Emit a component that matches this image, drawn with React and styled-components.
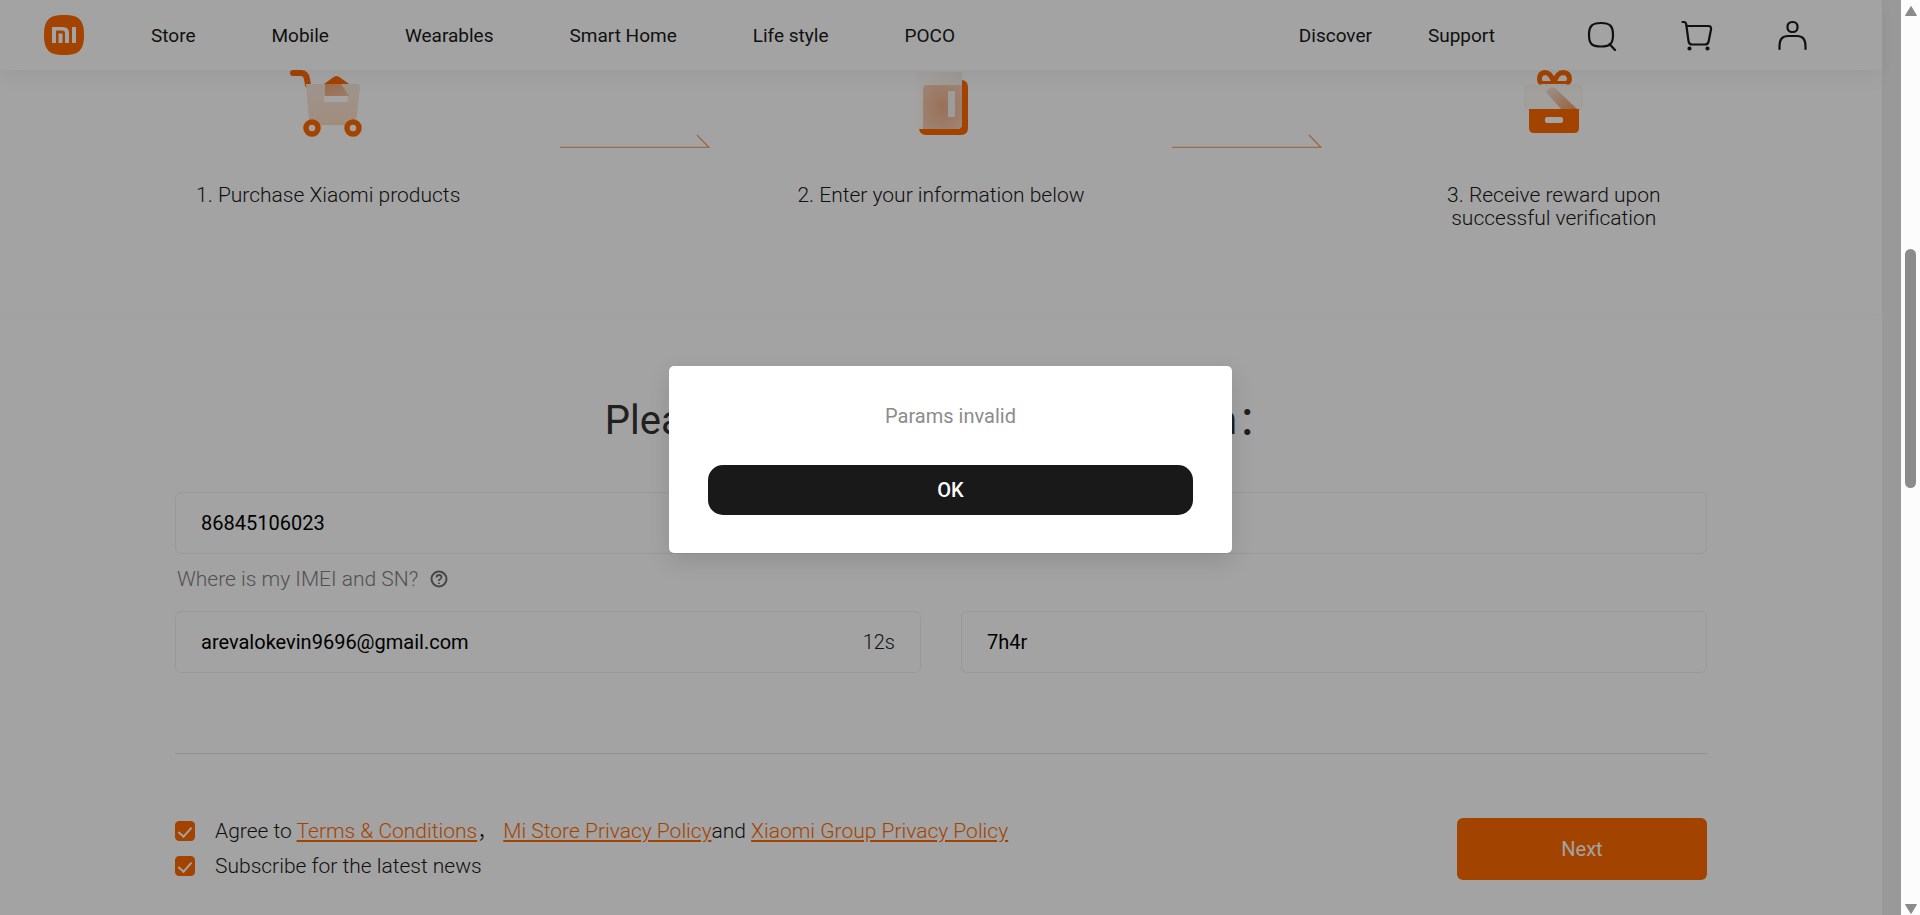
import { useState } from "react";
import styled, { createGlobalStyle } from "styled-components";

const GlobalStyle = createGlobalStyle`
  * {
    box-sizing: border-box;
  }
  body {
    margin: 0;
    font-family: Roboto, "Noto Sans CJK SC", sans-serif;
    font-size: 20px;
    color: #191919;
  }
  button, input {
    font-family: inherit;
    font-size: inherit;
  }
`

const Shell = styled.div`
  display: flex;
  height: 100vh;
  overflow: hidden;
`

const Screen = styled.div`
  position: relative;
  flex: 1;
  min-width: 0;
  overflow: hidden;
  background: #f0f0f0;
  padding-right: 19px;
`

const Page = styled.div`
  position: relative;
  min-height: 100%;
  background: white;
`

const Header = styled.header`
  position: absolute;
  top: 0;
  left: 0;
  right: 0;
  z-index: 1;
  height: 70px;
  padding: 0 74px 0 44px;
  display: flex;
  align-items: center;
  background: white;
  box-shadow: 0 6px 20px rgba(0, 0, 0, 0.06);
`

const Logo = styled.a`
  display: flex;
  margin-right: 67px;
`

const Nav = styled.nav`
  display: flex;
  gap: ${({ $gap }) => $gap};
`

const NavLink = styled.a`
  font-size: 19px;
  color: #191919;
  text-decoration: none;
  white-space: nowrap;
`

const Spacer = styled.div`
  flex: 1;
`

const Tools = styled.div`
  display: flex;
  gap: 63px;
  margin-left: 91px;
`

const ToolButton = styled.button`
  display: flex;
  padding: 0;
  border: none;
  background: transparent;
  cursor: pointer;
`

const Steps = styled.section`
  display: grid;
  grid-template-columns: repeat(5, 1fr);
  justify-items: center;
  align-items: start;
  height: 313px;
  padding: 50px 175px 0;
  box-shadow: 0 4px 10px rgba(0, 0, 0, 0.02);
`

const Step = styled.div`
  display: flex;
  flex-direction: column;
  align-items: center;
  gap: 34px;
  font-size: 21px;
  font-weight: 300;
  line-height: 23px;
  text-align: center;
`

const Arrow = styled.svg`
  margin-top: 84px;
`

const Form = styled.form`
  padding: 0 175px;
`

const Title = styled.h2`
  margin: 0;
  padding: 81px 0 44px;
  font-size: 40px;
  font-weight: 400;
  line-height: 54px;
  text-align: center;
  white-space: nowrap;
  color: #333;
`

const Field = styled.div`
  flex: 1;
  display: flex;
  align-items: center;
  height: 62px;
  padding: 0 25px;
  border: 1px solid #f0f0f0;
  border-radius: 6px;
  background: white;
`

const StyledInput = styled.input`
  flex: 1;
  min-width: 0;
  padding: 0;
  border: none;
  background: transparent;
  color: black;
  &:focus {
    outline: none;
  }
`

const Countdown = styled.span`
  font-weight: 300;
`

const Hint = styled.div`
  display: flex;
  align-items: center;
  gap: 12px;
  height: 50px;
  margin-bottom: 7px;
  padding-left: 2px;
  font-size: 21px;
  font-weight: 300;
  color: #808080;
`

const FieldRow = styled.div`
  display: flex;
  gap: 40px;
`

const Bottom = styled.div`
  display: flex;
  justify-content: space-between;
  align-items: flex-start;
  margin-top: 80px;
  padding-top: 64px;
  border-top: 1px solid #e4e4e4;
`

const Agreements = styled.div`
  display: flex;
  flex-direction: column;
  gap: 11px;
  padding-top: 1px;
  font-size: 21px;
  font-weight: 300;
  line-height: 24px;
`

const CheckRow = styled.div`
  display: flex;
  align-items: center;
  gap: 20px;
`

const StyledCheckbox = styled.input.attrs({ type: "checkbox" })`
  appearance: none;
  display: flex;
  justify-content: center;
  width: 20px;
  height: 20px;
  margin: 0;
  border: 1px solid #ff6900;
  border-radius: 4px;
  background: white;
  &:checked {
    background: #ff6900;
  }
  &:checked::before {
    content: "";
    width: 6px;
    height: 11px;
    margin-top: 2px;
    border: solid white;
    border-width: 0 2px 2px 0;
    transform: rotate(42deg);
  }
`

const PolicyLink = styled.a`
  color: #ff6900;
  text-decoration: underline;
  text-decoration-thickness: 2px;
  text-underline-offset: 2px;
`

const NextButton = styled.button`
  width: 250px;
  height: 62px;
  border: none;
  border-radius: 6px;
  background: #ff6900;
  color: white;
  cursor: pointer;
`

const Overlay = styled.div`
  position: absolute;
  inset: 0;
  z-index: 2;
  display: flex;
  align-items: center;
  justify-content: center;
  padding-top: 4px;
  background: rgba(0, 0, 0, 0.36);
`

const Dialog = styled.div`
  display: flex;
  flex-direction: column;
  gap: 35px;
  width: 563px;
  padding: 36px 39px 38px;
  border-radius: 5px;
  background: white;
  box-shadow: 0 8px 24px rgba(0, 0, 0, 0.12);
  text-align: center;
`

const Message = styled.p`
  margin: 0;
  line-height: 28px;
  color: #8c8c8c;
`

const OkButton = styled.button`
  height: 50px;
  border: none;
  border-radius: 15px;
  background: #191919;
  color: white;
  font-weight: 500;
  cursor: pointer;
`

const Scrollbar = styled.div`
  display: flex;
  flex-direction: column;
  align-items: center;
  width: 19px;
  padding: 6px 0 1px;
  background: #fcfcfc;
`

const Thumb = styled.div`
  width: 11px;
  height: 239px;
  margin-top: 233px;
  margin-bottom: auto;
  border-radius: 6px;
  background: #8b8b8b;
`

const leftLinks = ["Store", "Mobile", "Wearables", "Smart Home", "Life style", "POCO"];
const rightLinks = ["Discover", "Support"];

function MiLogo() {
  return (
    <svg width="40" height="40" viewBox="0 0 40 40">
      <path d="M20 0C35 0 40 5 40 20S35 40 20 40 0 35 0 20 5 0 20 0Z" fill="#ff6900" />
      <path d="M8 12H19Q25 12 25 18V28H21V18Q21 15.500 18 15.500H12V28H8Z" fill="white" />
      <path d="M14.500 18.500H18.500V28H14.500ZM28 12H32V28H28Z" fill="white" />
    </svg>
  );
}

function ToolIcon({ children }) {
  return (
    <svg width="32" height="32" viewBox="0 0 32 32" fill="none" stroke="#191919" strokeWidth="2.2" strokeLinecap="round">
      {children}
    </svg>
  );
}

function CartPicture() {
  return (
    <svg width="100" height="100" viewBox="0 0 100 100">
      <defs>
        <linearGradient id="basket" x1="0" y1="0" x2="0" y2="1">
          <stop offset="0" stopColor="#f7e9de" />
          <stop offset="1" stopColor="#fbdcc4" />
        </linearGradient>
        <linearGradient id="goods" x1="0" y1="0" x2="1" y2="1">
          <stop offset="0" stopColor="#f5a777" />
          <stop offset="1" stopColor="#f0c4a6" />
        </linearGradient>
      </defs>
      <path d="M15 23H23Q28 23 29 29L30 35" fill="none" stroke="#ff6900" strokeWidth="6" strokeLinecap="round" />
      <path d="M46 34L55 27.500Q58.500 24.500 62 27.500L71 34Z" fill="#ff6900" />
      <path d="M28 34H79Q82 34 82 38L78 72Q77 75 74 75H34Q31 75 31 72Z" fill="url(#basket)" />
      <path d="M47 34H63L71 46H47Z" fill="url(#goods)" />
      <path d="M46 46H70V50Q70 52 68 52H46Z" fill="white" />
      <circle cx="34" cy="78" r="6" fill="white" stroke="#ff6900" strokeWidth="5.500" />
      <circle cx="75" cy="78" r="6" fill="white" stroke="#ff6900" strokeWidth="5.500" />
    </svg>
  );
}

function BookPicture() {
  return (
    <svg width="100" height="100" viewBox="0 0 100 100">
      <defs>
        <radialGradient id="cover" cx="0.5" cy="0.5" r="0.75">
          <stop offset="0" stopColor="#f0b088" />
          <stop offset="1" stopColor="#f7d3bb" />
        </radialGradient>
        <linearGradient id="glass" x1="0" y1="0" x2="1" y2="0">
          <stop offset="0" stopColor="#fffdfa" />
          <stop offset="1" stopColor="#f6efe7" />
        </linearGradient>
      </defs>
      <path d="M28 79H66Q71 79 71 74V30Q77 31 77 37V78Q77 85 70 85H36Q29 85 28 79Z" fill="#ff6900" />
      <path d="M24 27Q24 22 29 22H71V74Q71 79 66 79H28Q24 79 24 75Z" fill="url(#glass)" />
      <path d="M32 39Q32 35 36 35H71V74Q71 79 66 79H32Z" fill="url(#cover)" />
      <rect x="57" y="41" width="7" height="26" fill="#f5f5f5" />
    </svg>
  );
}

function GiftPicture() {
  return (
    <svg width="100" height="100" viewBox="0 0 100 100">
      <defs>
        <linearGradient id="ribbon" x1="0" y1="0" x2="1" y2="1">
          <stop offset="0" stopColor="#f0e4db" />
          <stop offset="1" stopColor="#f49a62" />
        </linearGradient>
      </defs>
      <g fill="none" stroke="#ff6900" strokeWidth="5">
        <path d="M50 34V33Q47 22.500 41 22.500Q35.500 23 35.500 29Q35.500 32 38 34" />
        <path d="M50 34V33Q53 22.500 59 22.500Q65.500 23 65.500 29Q65.500 32 62 34" />
        <path d="M38 32.500H62" strokeWidth="3" />
      </g>
      <rect x="21" y="35" width="57" height="25" rx="4" fill="#fcfaf5" stroke="#faf2e4" />
      <path d="M42 42Q45 36 51 38L73 59H57Z" fill="url(#ribbon)" />
      <path d="M25 59H75V78Q75 83 70 83H30Q25 83 25 78Z" fill="#ff6900" />
      <rect x="41" y="67" width="18" height="6" rx="2" fill="white" />
    </svg>
  );
}

function StepArrow() {
  return (
    <Arrow width="150" height="14" viewBox="0 0 150 14" fill="none" stroke="#f8a872">
      <path d="M0 13.500H149L137 1" strokeWidth="1.500" />
    </Arrow>
  );
}

function CheckItem({ id, children }) {
  const [checked, setChecked] = useState(true);

  return (
    <CheckRow>
      <StyledCheckbox id={id} checked={checked} onChange={() => setChecked(!checked)} />
      <label htmlFor={id}>{children}</label>
    </CheckRow>
  );
}

export default function App() {
  const [imei, setImei] = useState("86845106023");
  const [email, setEmail] = useState("arevalokevin9696@gmail.com");
  const [code, setCode] = useState("7h4r");
  const [showDialog, setShowDialog] = useState(true);

  return (
    <>
      <GlobalStyle />
      <Shell>
        <Screen>
          <Page>
            <Header>
              <Logo href="#" aria-label="Mi"><MiLogo /></Logo>
              <Nav $gap="76px">
                {leftLinks.map((txt) => <NavLink href="#" key={txt}>{txt}</NavLink>)}
              </Nav>
              <Spacer />
              <Nav $gap="56px">
                {rightLinks.map((txt) => <NavLink href="#" key={txt}>{txt}</NavLink>)}
              </Nav>
              <Tools>
                <ToolButton aria-label="Search">
                  <ToolIcon>
                    <path d="M15 4C24 4 27 7 27 16S24 27.500 15 27.500 3 25 3 16 6 4 15 4ZM23.500 25L29 31" />
                  </ToolIcon>
                </ToolButton>
                <ToolButton aria-label="Cart">
                  <ToolIcon>
                    <path d="M1.500 3H3Q5 3 5.300 6L7.500 22Q8 25.500 11 25.500H24Q27 25.500 27.600 22.500L30 10.500Q30.500 7 27.500 7H5.500" />
                    <circle cx="8.500" cy="29.500" r="1" />
                    <circle cx="26.500" cy="29.500" r="1" />
                  </ToolIcon>
                </ToolButton>
                <ToolButton aria-label="Account">
                  <ToolIcon>
                    <rect x="11.500" y="3" width="10" height="10" rx="4.500" />
                    <path d="M3.500 30V27Q3.500 17 12 17H21Q29.500 17 29.500 27V30" />
                  </ToolIcon>
                </ToolButton>
              </Tools>
            </Header>

            <Steps>
              <Step>
                <CartPicture />
                <span>1. Purchase Xiaomi products</span>
              </Step>
              <StepArrow />
              <Step>
                <BookPicture />
                <span>2. Enter your information below</span>
              </Step>
              <StepArrow />
              <Step>
                <GiftPicture />
                <span>3. Receive reward upon<br />successful verification</span>
              </Step>
            </Steps>

            <Form onSubmit={(e) => e.preventDefault()}>
              <Title>Please enter your buyer information：</Title>
              <Field>
                <StyledInput type="text" aria-label="IMEI or SN" value={imei} onChange={(e) => setImei(e.target.value)} />
              </Field>
              <Hint>
                Where is my IMEI and SN?
                <svg width="18" height="18" viewBox="0 0 18 18" fill="none" stroke="#707070" strokeWidth="2">
                  <circle cx="9" cy="9" r="7.500" />
                  <path d="M6.500 7.500Q6.500 5 9 5T11.500 7.200Q11.500 8.500 9 10V11M9 12.500V14" strokeWidth="1.800" />
                </svg>
              </Hint>
              <FieldRow>
                <Field>
                  <StyledInput type="text" aria-label="Email" value={email} onChange={(e) => setEmail(e.target.value)} />
                  <Countdown>12s</Countdown>
                </Field>
                <Field>
                  <StyledInput type="text" aria-label="Code" value={code} onChange={(e) => setCode(e.target.value)} />
                </Field>
              </FieldRow>
              <Bottom>
                <Agreements>
                  <CheckItem id="agree">
                    Agree to <PolicyLink href="#">Terms &amp; Conditions</PolicyLink>，{" "}
                    <PolicyLink href="#">Mi Store Privacy Policy</PolicyLink>and{" "}
                    <PolicyLink href="#">Xiaomi Group Privacy Policy</PolicyLink>
                  </CheckItem>
                  <CheckItem id="subscribe">Subscribe for the latest news</CheckItem>
                </Agreements>
                <NextButton>Next</NextButton>
              </Bottom>
            </Form>
          </Page>

          {showDialog &&
            <Overlay>
              <Dialog role="alertdialog" aria-label="Params invalid">
                <Message>Params invalid</Message>
                <OkButton onClick={() => setShowDialog(false)}>OK</OkButton>
              </Dialog>
            </Overlay>
          }
        </Screen>
        <Scrollbar>
          <svg width="12" height="10" viewBox="0 0 12 10">
            <path d="M6 0.500L11.500 9.500H0.500Z" fill="#8b8b8b" stroke="#8b8b8b" strokeLinejoin="round" />
          </svg>
          <Thumb />
          <svg width="12" height="10" viewBox="0 0 12 10">
            <path d="M6 9.500L11.500 0.500H0.500Z" fill="#8b8b8b" stroke="#8b8b8b" strokeLinejoin="round" />
          </svg>
        </Scrollbar>
      </Shell>
    </>
  );
}
